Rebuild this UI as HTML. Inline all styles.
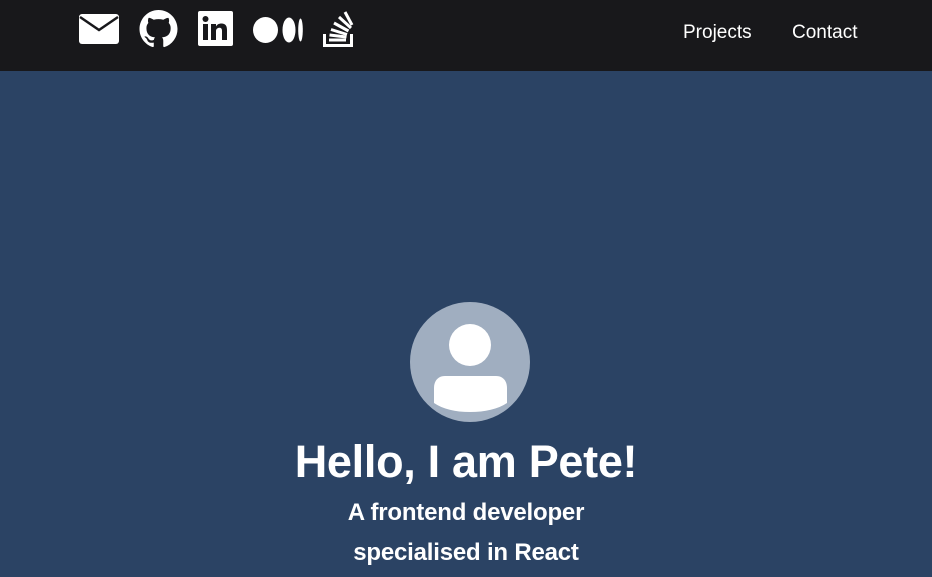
<!DOCTYPE html>
<html><head><style>
*{margin:0;padding:0;box-sizing:border-box}
body{width:932px;height:577px;overflow:hidden;background:#2b4364;font-family:"Liberation Sans",sans-serif;color:#fff}
.nav{position:absolute;left:0;top:0;width:932px;height:71px;background:#18181b}
.nav svg{position:absolute}
.links{position:absolute;top:22px;font-size:19px}
h1{position:absolute;left:0;width:932px;top:436px;text-align:center;font-size:45px;font-weight:bold;letter-spacing:-0.3px}
.sub{position:absolute;left:0;width:932px;text-align:center;font-size:24px;font-weight:bold;letter-spacing:-0.2px}
</style></head><body>
<div class="nav">
<svg style="left:79px;top:14px" width="40" height="30" viewBox="0 0 40 30"><rect x="0" y="0" width="40" height="30" rx="3" fill="#fff"/><path d="M1 3 L20 16 L39 3" stroke="#18181b" stroke-width="2.5" fill="none"/></svg>
<svg style="left:139px;top:10px" width="39" height="38" viewBox="0 0 16 16"><path fill="#fff" d="M8 0C3.58 0 0 3.58 0 8c0 3.54 2.29 6.53 5.47 7.590.4.07.55-.17.55-.38 0-.19-.01-.82-.01-1.49-2.01.37-2.530-.49-2.69-.94-.09-.23-.48-.94-.82-1.13-.28-.15-.68-.52-.01-.53.63-.01 1.08.58 1.23.82.72 1.21 1.87.87 2.33.66.07-.52.28-.87.51-1.07-1.78-.2-3.64-.89-3.64-3.95 0-.87.31-1.59.82-2.150-.08-.2-.36-1.02.08-2.12 0 0 .67-.21 2.2.82.64-.18 1.32-.27 2-.27.68 0 1.36.09 2 .27 1.53-1.04 2.2-.82 2.2-.82.44 1.1.16 1.92.08 2.12.51.56.82 1.27.82 2.15 0 3.07-1.87 3.75-3.65 3.95.29.25.54.73.54 1.48 0 1.07-.01 1.93-.01 2.2 0 .21.15.46.55.38A8.013 8.013 0 0 0 16 8c0-4.42-3.58-8-8-8z"/></svg>
<svg style="left:198px;top:11px" width="35" height="35" viewBox="0 0 35 35"><rect width="35" height="35" rx="2" fill="#fff"/><rect x="5" y="13" width="5" height="16" fill="#18181b"/><circle cx="7.5" cy="8" r="3" fill="#18181b"/><path d="M13 13h5v2.5c1-2 3-3 5.5-3 4 0 5.5 2.5 5.5 6.5V29h-5v-9c0-2-.7-3.2-2.5-3.2S18 18 18 20v9h-5z" fill="#18181b"/></svg>
<svg style="left:253px;top:17px" width="50" height="26" viewBox="0 0 50 26"><ellipse cx="12.5" cy="13" rx="12.5" ry="13" fill="#fff"/><ellipse cx="36" cy="13" rx="6.5" ry="12.5" fill="#fff"/><ellipse cx="47.5" cy="13" rx="2.3" ry="11.5" fill="#fff"/></svg>
<svg style="left:323px;top:11px" width="31" height="36" viewBox="0 0 31 36"><path d="M1.5 23v11.5h27V23" stroke="#fff" stroke-width="3" fill="none"/><g stroke="#fff" stroke-width="3"><path d="M6 29h17"/><path d="M6.5 24l17 2"/><path d="M8 18.5l16 5"/><path d="M11 12l14.5 8"/><path d="M16 6l12 11"/><path d="M22 1l7 13"/></g></svg>
<div class="links" style="left:683px">Projects</div>
<div class="links" style="left:792px">Contact</div>
</div>
<svg style="position:absolute;left:410px;top:302px" width="120" height="120" viewBox="0 0 120 120"><circle cx="60" cy="60" r="60" fill="#a0aec0"/><circle cx="60" cy="43" r="21" fill="#fff"/><path d="M24 86c0-7 4-12 11-12h51c7 0 11 5 11 12v15c-9 6-22 9-37 9s-27-3-36-9z" fill="#fff"/></svg>
<h1>Hello, I am Pete!</h1>
<div class="sub" style="top:499px">A frontend developer</div>
<div class="sub" style="top:539px">specialised in React</div>
</body></html>
